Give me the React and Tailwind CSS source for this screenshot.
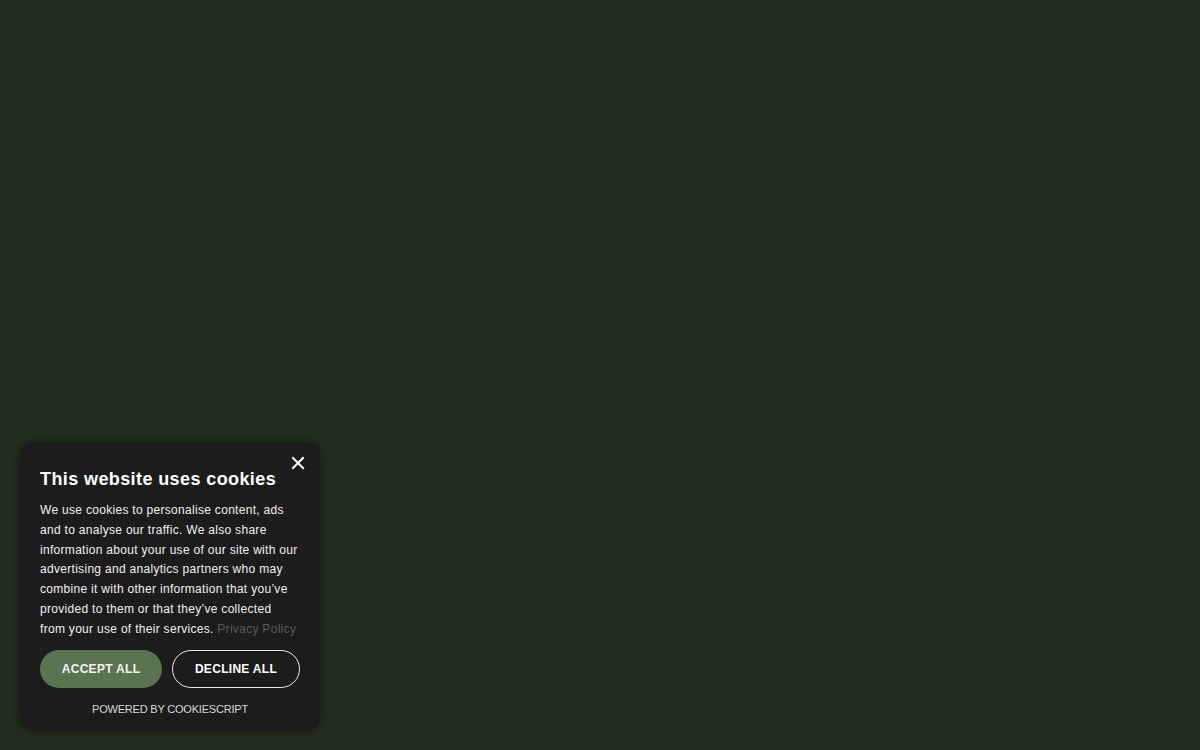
export default function App() {
  return (
    <div
      className="w-[1200px] h-[750px] bg-[#232e20] relative overflow-hidden"
      style={{ fontFamily: '"Liberation Sans", Arial, sans-serif' }}
    >
      {/* Баннер cookies */}
      <div className="absolute left-[20px] top-[443px] w-[300px] h-[287px] bg-[#1c1c1c] rounded-[12px] shadow-[0_0_12px_rgba(0,0,0,0.45)] px-[20px] pt-[25px]">
        <svg
          className="absolute left-[271px] top-[13px]"
          width="14"
          height="14"
          viewBox="0 0 14 14"
        >
          <path d="M2 2 L12 12 M12 2 L2 12" stroke="#ffffff" strokeWidth="2" strokeLinecap="square" />
        </svg>
        <h2 className="text-[18px] leading-[22px] font-bold text-white tracking-[0.4px]">
          This website uses cookies
        </h2>
        <p className="mt-[11px] text-[12px] leading-[19.8px] text-[#f0f0f0] tracking-[0.3px]">
          We use cookies to personalise content, ads and to analyse our traffic. We also share
          information about your use of our site with our advertising and analytics partners who may
          combine it with other information that you’ve provided to them or that they’ve collected
          from your use of their services.{' '}
          <a className="text-[#4e6149]">Privacy Policy</a>
        </p>
        <div className="flex gap-[10px] mt-[10px]">
          <button className="w-[122px] h-[38px] rounded-full bg-[#5a7350] text-[#f4f4f4] text-[12px] font-bold tracking-[0.3px]">
            ACCEPT ALL
          </button>
          <button className="w-[128px] h-[38px] rounded-full border border-[#e6e6e6] text-white text-[12px] font-bold tracking-[0.3px]">
            DECLINE ALL
          </button>
        </div>
        <div className="mt-[13px] text-center text-[11px] text-[#d8d8d8] tracking-[-0.2px]">
          POWERED BY COOKIESCRIPT
        </div>
      </div>
    </div>
  );
}
